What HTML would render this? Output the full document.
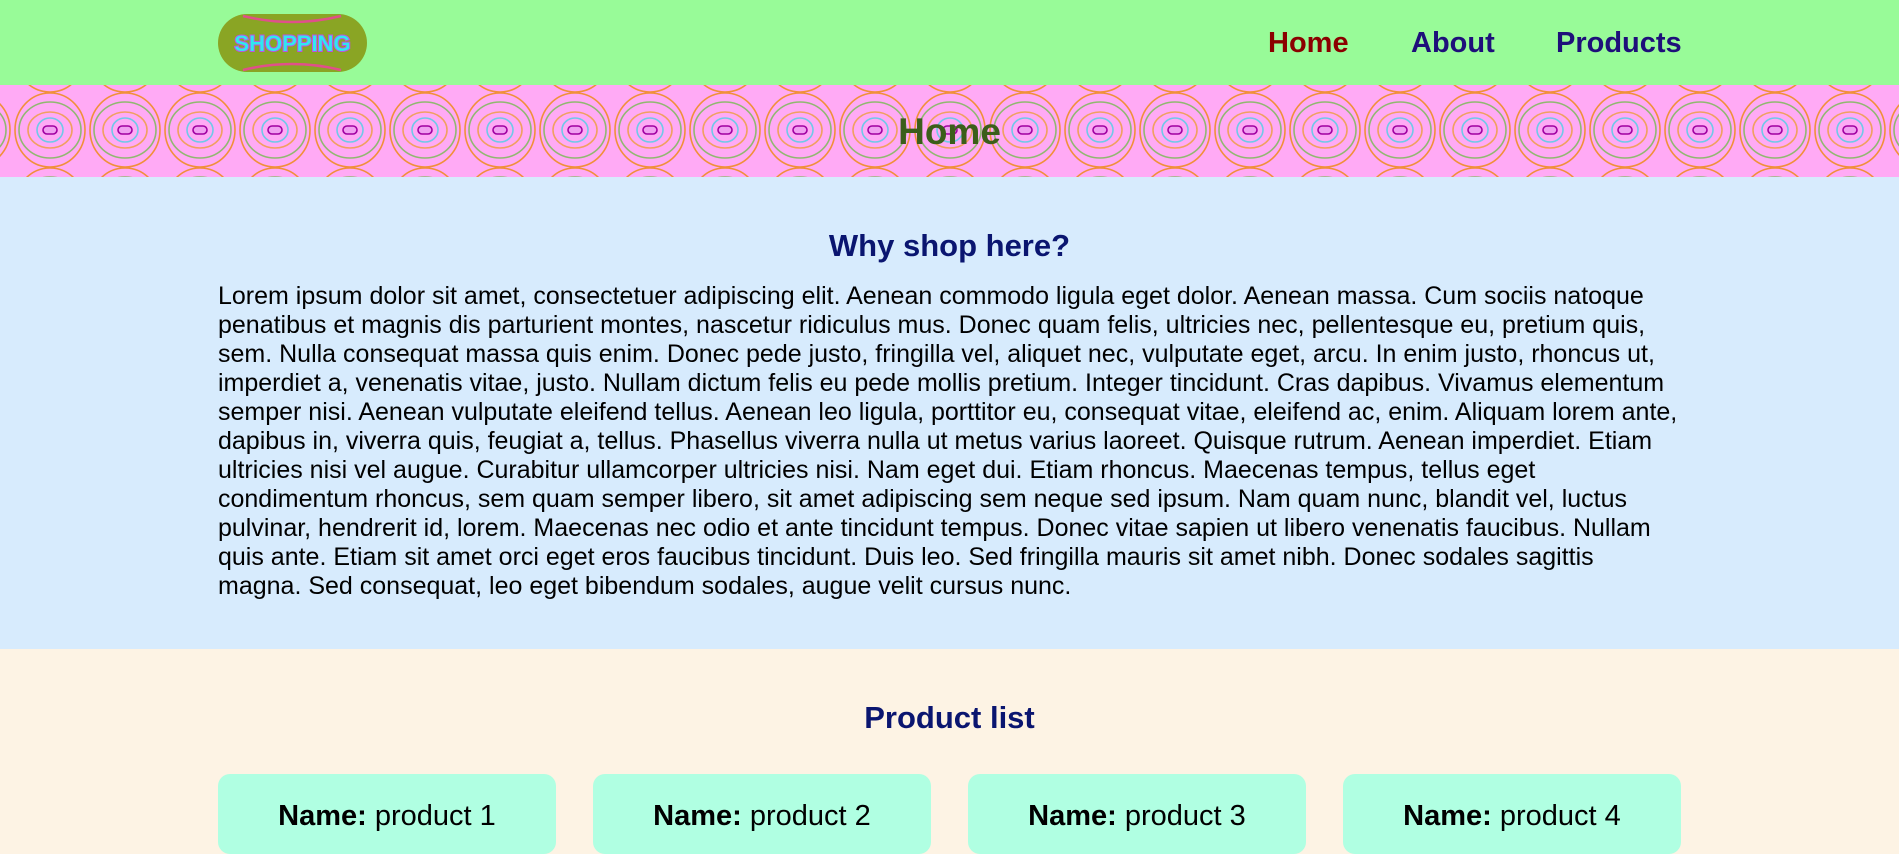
<!DOCTYPE html>
<html><head><meta charset="utf-8"><style>
html,body{margin:0;padding:0;}
body{width:1899px;height:832px;overflow:hidden;font-family:"Liberation Sans",Arial,sans-serif;background:#fdf3e4;}
.hdr{height:85px;background:#98fb98;position:relative;}
.logo{position:absolute;left:218px;top:14px;width:149px;height:58px;}
.nav{position:absolute;top:27px;font-size:29px;font-weight:bold;}
.ban{height:92px;position:relative;background-color:#ffaaf5;
background-image:url("data:image/svg+xml;utf8,<svg xmlns='http://www.w3.org/2000/svg' width='75' height='75'><g fill='none' stroke-width='1.6'><ellipse cx='37.5' cy='37.5' rx='35' ry='37' stroke='%23f0903a'/><ellipse cx='37.5' cy='37.5' rx='31' ry='28' stroke='%2390b870'/><ellipse cx='37.5' cy='37.5' rx='22' ry='18' stroke='%23f0a060'/><ellipse cx='37.5' cy='37.5' rx='13' ry='12' stroke='%2370c8e8'/><rect x='30.5' y='33.5' width='14' height='8' rx='4' stroke='%23a000a0' fill='%23f0a0f0'/></g></svg>");
background-size:75px 75px;background-position:12.5px 7.5px;}
.ban h1{margin:0;position:absolute;left:0;right:0;top:25px;text-align:center;font-size:37px;color:#3b5e1a;line-height:44px;}
.why{height:472px;background:#d7ebfd;position:relative;}
.why h2{margin:0;position:absolute;top:49px;left:0;right:0;text-align:center;font-size:31px;color:#0a1570;line-height:40px;}
.why p{margin:0;position:absolute;top:105px;left:218px;width:1465px;font-size:25px;line-height:29px;color:#000;}
.pl{position:relative;height:183px;}
.pl h2{margin:0;position:absolute;top:49px;left:0;right:0;text-align:center;font-size:31px;color:#0a1570;line-height:40px;}
.card{position:absolute;top:125px;width:338px;height:80px;background:#b0ffe2;border-radius:12px;text-align:center;font-size:29px;line-height:34px;padding-top:25px;box-sizing:border-box;}
</style></head><body>
<div class="hdr">
<svg class="logo" viewBox="0 0 149 58" width="149" height="58">
<rect x="0" y="0" width="149" height="58" rx="29" fill="#8aa524"/>
<path d="M25 2 Q74 14 123 2" stroke="#e0508a" stroke-width="2.5" fill="none"/>
<path d="M25 56 Q74 44 123 56" stroke="#e0508a" stroke-width="2.5" fill="none"/>
<text x="74.5" y="37" text-anchor="middle" font-family="Liberation Sans,Arial,sans-serif" font-weight="bold" font-size="22" fill="#30e8f0" stroke="#c050e0" stroke-width="2" paint-order="stroke">SHOPPING</text>
</svg>
<span class="nav" style="left:1268px;color:#8b0000">Home</span>
<span class="nav" style="left:1411px;color:#1e0f7a">About</span>
<span class="nav" style="left:1556px;color:#1e0f7a">Products</span>
</div>
<div class="ban"><h1>Home</h1></div>
<div class="why"><h2>Why shop here?</h2>
<p>Lorem ipsum dolor sit amet, consectetuer adipiscing elit. Aenean commodo ligula eget dolor. Aenean massa. Cum sociis natoque penatibus et magnis dis parturient montes, nascetur ridiculus mus. Donec quam felis, ultricies nec, pellentesque eu, pretium quis, sem. Nulla consequat massa quis enim. Donec pede justo, fringilla vel, aliquet nec, vulputate eget, arcu. In enim justo, rhoncus ut, imperdiet a, venenatis vitae, justo. Nullam dictum felis eu pede mollis pretium. Integer tincidunt. Cras dapibus. Vivamus elementum semper nisi. Aenean vulputate eleifend tellus. Aenean leo ligula, porttitor eu, consequat vitae, eleifend ac, enim. Aliquam lorem ante, dapibus in, viverra quis, feugiat a, tellus. Phasellus viverra nulla ut metus varius laoreet. Quisque rutrum. Aenean imperdiet. Etiam ultricies nisi vel augue. Curabitur ullamcorper ultricies nisi. Nam eget dui. Etiam rhoncus. Maecenas tempus, tellus eget condimentum rhoncus, sem quam semper libero, sit amet adipiscing sem neque sed ipsum. Nam quam nunc, blandit vel, luctus pulvinar, hendrerit id, lorem. Maecenas nec odio et ante tincidunt tempus. Donec vitae sapien ut libero venenatis faucibus. Nullam quis ante. Etiam sit amet orci eget eros faucibus tincidunt. Duis leo. Sed fringilla mauris sit amet nibh. Donec sodales sagittis magna. Sed consequat, leo eget bibendum sodales, augue velit cursus nunc.</p>
</div>
<div class="pl"><h2>Product list</h2>
<div class="card" style="left:218px"><b>Name:</b> product 1</div>
<div class="card" style="left:593px"><b>Name:</b> product 2</div>
<div class="card" style="left:968px"><b>Name:</b> product 3</div>
<div class="card" style="left:1343px"><b>Name:</b> product 4</div>
</div>
</body></html>
